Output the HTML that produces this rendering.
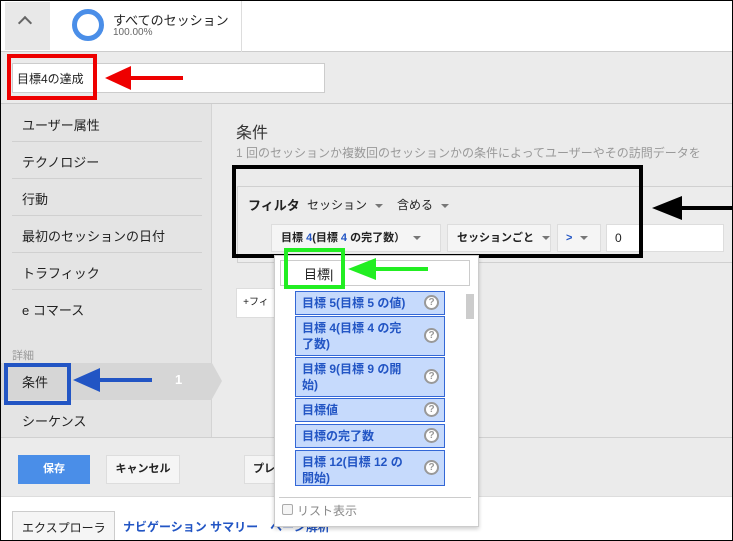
<!DOCTYPE html>
<html><head><meta charset="utf-8"><style>
*{box-sizing:border-box;margin:0;padding:0}
body{width:733px;height:541px;overflow:hidden;background:#ebebeb;font-family:"Liberation Sans","Noto Sans CJK JP",sans-serif;font-size:13px;color:#222;position:relative}
.a{position:absolute}
.frame{left:0;top:0;width:733px;height:541px;border:1px solid #000;z-index:50;pointer-events:none}
.side div.it{position:absolute;left:22px;font-size:13px}
.sep{position:absolute;left:12px;width:190px;height:1px;background:#d0d0d0}
.opt{position:absolute;left:295px;width:150px;background:#c6dafc;border:1px solid #3367d6;color:#2255c4;font-weight:bold;font-size:12px;line-height:16px;padding:3px 6px}
.q{position:absolute;right:5px;top:50%;margin-top:-8px;width:15px;height:15px;border:2px solid #999;border-radius:50%;background:#fff;color:#999;font-size:10px;line-height:11px;text-align:center;font-weight:bold}
.btn{position:absolute;background:#f5f5f5;border:1px solid #ddd;font-weight:bold;font-size:11px;text-align:center}
.tri{display:inline-block;width:0;height:0;border-left:4px solid transparent;border-right:4px solid transparent;border-top:4px solid #777;vertical-align:middle;margin-left:8px}
</style></head><body>
<div class="a frame"></div>
<div class="a" style="left:0;top:0;width:733px;height:52px;background:#fff;border-bottom:1px solid #ccc"></div>
<div class="a" style="left:5px;top:2px;width:45px;height:48px;background:#e8e8e8"></div>
<div class="a" style="left:20px;top:18px;width:10px;height:10px;border-left:2px solid #666;border-top:2px solid #666;transform:rotate(45deg)"></div>
<div class="a" style="left:72px;top:9px;width:32px;height:32px;border:5px solid #4a8ee8;border-radius:50%"></div>
<div class="a" style="left:113px;top:10px;font-size:13px">すべてのセッション</div>
<div class="a" style="left:113px;top:27px;font-size:10px;color:#666">100.00%</div>
<div class="a" style="left:241px;top:0;width:1px;height:52px;background:#ddd"></div>
<div class="a" style="left:12px;top:63px;width:313px;height:30px;background:#fff;border:1px solid #ccc"></div>
<div class="a" style="left:17px;top:70px;font-size:12px">目標4の達成</div>
<div class="a" style="left:7px;top:54px;width:90px;height:46px;border:4px solid #e00"></div>
<div class="a" style="left:130px;top:76px;width:53px;height:4px;background:#e00"></div>
<div class="a" style="left:105px;top:66px;width:0;height:0;border-top:12px solid transparent;border-bottom:12px solid transparent;border-right:26px solid #e00"></div>
<div class="a" style="left:0;top:103px;width:733px;height:1px;background:#ccc"></div>
<div class="a side" style="left:0;top:104px;width:212px;height:333px;background:#e4e4e4;border-right:1px solid #d4d4d4">
<div class="it" style="top:11px">ユーザー属性</div><div class="sep" style="top:37px"></div>
<div class="it" style="top:48px">テクノロジー</div><div class="sep" style="top:74px"></div>
<div class="it" style="top:85px">行動</div><div class="sep" style="top:111px"></div>
<div class="it" style="top:122px">最初のセッションの日付</div><div class="sep" style="top:148px"></div>
<div class="it" style="top:159px">トラフィック</div><div class="sep" style="top:185px"></div>
<div class="it" style="top:196px">e コマース</div>
<div class="a" style="left:12px;top:243px;font-size:11px;color:#999">詳細</div>
<div class="a" style="left:0;top:259px;width:212px;height:37px;background:#d6d6d6"></div>
<div class="a" style="left:212px;top:259px;width:0;height:0;border-top:18px solid transparent;border-bottom:18px solid transparent;border-left:10px solid #d6d6d6"></div>
<div class="it" style="top:268px">条件</div>
<div class="a" style="left:175px;top:268px;color:#fff;font-weight:bold">1</div>
<div class="it" style="top:307px">シーケンス</div>
</div>
<div class="a" style="left:4px;top:363px;width:67px;height:42px;border:4px solid #2255c4"></div>
<div class="a" style="left:100px;top:378px;width:52px;height:4px;background:#2255c4"></div>
<div class="a" style="left:73px;top:368px;width:0;height:0;border-top:12px solid transparent;border-bottom:12px solid transparent;border-right:27px solid #2255c4"></div>
<div class="a" style="left:236px;top:119px;font-size:16px;color:#333">条件</div>
<div class="a" style="left:236px;top:144px;font-size:12px;color:#999;white-space:nowrap">1 回のセッションか複数回のセッションかの条件によってユーザーやその訪問データを</div>
<div class="a" style="left:237px;top:186px;width:500px;height:77px;border:1px solid #d0d0d0;background:#ececec"></div>
<div class="a" style="left:248px;top:195px;font-weight:bold;font-size:13px">フィルタ</div>
<div class="a" style="left:307px;top:196px;font-size:12px">セッション<span class="tri"></span></div>
<div class="a" style="left:397px;top:196px;font-size:12px">含める<span class="tri"></span></div>
<div class="btn" style="left:271px;top:224px;width:170px;height:28px;line-height:26px;text-align:left;padding-left:9px">目標 <span style="color:#2255c4">4</span>(目標 <span style="color:#2255c4">4</span> の完了数）<span class="tri"></span></div>
<div class="btn" style="left:447px;top:224px;width:104px;height:28px;line-height:26px;text-align:left;padding-left:9px">セッションごと<span class="tri"></span></div>
<div class="btn" style="left:557px;top:224px;width:44px;height:28px;line-height:26px;text-align:left;padding-left:8px;color:#2255c4">&gt;<span class="tri"></span></div>
<div class="a" style="left:606px;top:224px;width:118px;height:28px;background:#fff;border:1px solid #ddd;padding:6px 8px;font-size:12px">0</div>
<div class="a" style="left:232px;top:165px;width:411px;height:93px;border:4px solid #000"></div>
<div class="a" style="left:680px;top:206px;width:53px;height:4px;background:#000"></div>
<div class="a" style="left:652px;top:196px;width:0;height:0;border-top:12px solid transparent;border-bottom:12px solid transparent;border-right:30px solid #000"></div>
<div class="btn" style="left:236px;top:288px;width:40px;height:30px;line-height:28px;font-weight:normal;background:#fff;font-size:10px">+フィ</div>
<div class="a" style="left:0;top:437px;width:733px;height:1px;background:#d0d0d0"></div>
<div class="a" style="left:18px;top:455px;width:72px;height:29px;background:#4a8ee8;color:#fff;font-weight:bold;font-size:11px;text-align:center;line-height:29px">保存</div>
<div class="btn" style="left:106px;top:455px;width:74px;height:29px;line-height:27px">キャンセル</div>
<div class="btn" style="left:244px;top:455px;width:60px;height:29px;line-height:27px;text-align:left;padding-left:8px">プレ</div>
<div class="a" style="left:0;top:496px;width:733px;height:45px;background:#fff;border-top:1px solid #ddd"></div>
<div class="a" style="left:12px;top:511px;width:103px;height:30px;border:1px solid #ccc;border-bottom:none;background:#f5f5f5;padding:7px 0 0 9px;font-size:12px">エクスプローラ</div>
<div class="a" style="left:123px;top:518px;color:#2255c4;font-size:12px;font-weight:bold;white-space:nowrap">ナビゲーション サマリー　ページ解析</div>
<div class="a" style="left:274px;top:255px;width:205px;height:272px;background:#fff;border:1px solid #ccc;box-shadow:0 2px 4px rgba(0,0,0,.2);z-index:5">
<div class="a" style="left:5px;top:4px;width:190px;height:26px;border:1px solid #ccc"></div>
<div class="a" style="left:29px;top:8px;font-size:13px">目標|</div>
<div class="a" style="left:191px;top:38px;width:8px;height:25px;background:#ccc"></div>
<div class="a" style="left:4px;top:241px;width:192px;height:1px;background:#ccc"></div>
<div class="a" style="left:7px;top:248px;width:11px;height:11px;border:1px solid #aaa;border-radius:2px;background:#f5f5f5"></div>
<div class="a" style="left:22px;top:246px;color:#888;font-size:12px">リスト表示</div>
</div>
<div style="position:absolute;z-index:6;left:0;top:0">
<div class="opt" style="top:291px;height:24px">目標 5(目標 5 の値)<span class="q">?</span></div>
<div class="opt" style="top:316px;height:40px">目標 4(目標 4 の完<br>了数)<span class="q">?</span></div>
<div class="opt" style="top:357px;height:40px">目標 9(目標 9 の開<br>始)<span class="q">?</span></div>
<div class="opt" style="top:398px;height:24px">目標値<span class="q">?</span></div>
<div class="opt" style="top:424px;height:24px">目標の完了数<span class="q">?</span></div>
<div class="opt" style="top:450px;height:36px;overflow:hidden">目標 12(目標 12 の<br>開始)<span class="q">?</span></div>
<div class="a" style="left:284px;top:248px;width:61px;height:41px;border:4px solid #2e2"></div>
<div class="a" style="left:375px;top:267px;width:53px;height:4px;background:#2e2"></div>
<div class="a" style="left:348px;top:258px;width:0;height:0;border-top:11px solid transparent;border-bottom:11px solid transparent;border-right:28px solid #2e2"></div>
</div>
</body></html>
